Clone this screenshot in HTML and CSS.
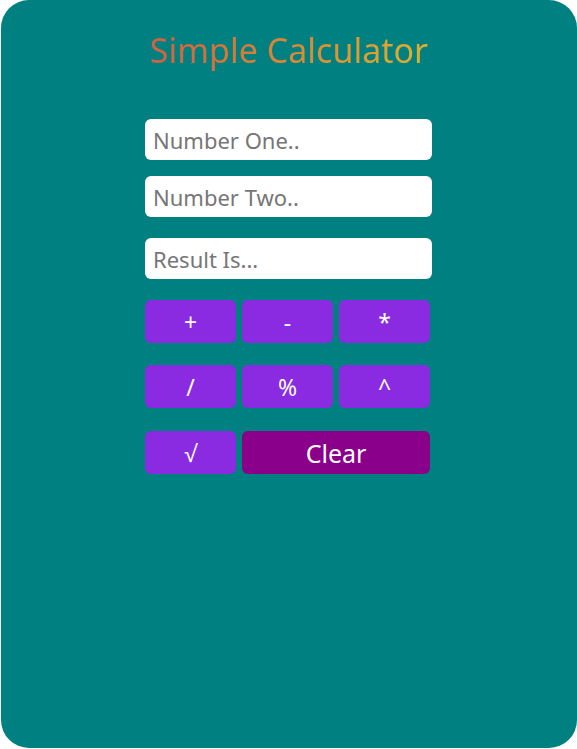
FILE: index.html
```html
<!DOCTYPE html>
<html>
<head>
<meta charset="utf-8">
<link rel="stylesheet" href="styles.css">
</head>
<body>
<div class="calc">
  <h1 class="title">Simple Calculator</h1>
  <div class="panel">
    <input class="field" type="text" placeholder="Number One..">
    <input class="field" type="text" placeholder="Number Two..">
    <input class="field result" type="text" placeholder="Result Is...">
    <div class="keys">
      <button class="key">+</button>
      <button class="key">-</button>
      <button class="key">*</button>
      <button class="key">/</button>
      <button class="key">%</button>
      <button class="key">^</button>
      <button class="key last">√</button>
      <button class="key clear last">Clear</button>
    </div>
  </div>
</div>
</body>
</html>
```

FILE: styles.css
```css
html, body {
  margin: 0;
  padding: 0;
  background: #ffffff;
}
body {
  font-family: "Noto Sans", "Open Sans", sans-serif;
}
.calc {
  margin-left: 1px;
  width: 576px;
  height: 748px;
  background: #008080;
  border-radius: 28px;
  display: flex;
  flex-direction: column;
  align-items: flex-start;
}
.title {
  align-self: center;
  margin: 28px 0 0 0;
  font-size: 34px;
  line-height: 44px;
  font-weight: 400;
  background: linear-gradient(to right, #d2603e, #e0b02c);
  -webkit-background-clip: text;
  background-clip: text;
  color: transparent;
}
.panel {
  margin-top: 47px;
  margin-left: 144px;
  width: 287px;
  display: flex;
  flex-direction: column;
}
.field {
  box-sizing: border-box;
  height: 41px;
  border: none;
  border-radius: 6px;
  padding: 0 8px;
  font-family: inherit;
  font-size: 22px;
  color: #333;
  background: #fff;
  margin: 0 0 16px 0;
  outline: none;
}
.field::placeholder {
  color: #767676;
}
.field.result {
  margin-top: 5px;
  margin-bottom: 21px;
}
.keys {
  display: grid;
  grid-template-columns: 91px 91px 91px;
  column-gap: 6px;
  row-gap: 22px;
}
.key {
  height: 43px;
  border: none;
  border-radius: 6px;
  background: #8a2be2;
  color: #fff;
  font-family: inherit;
  font-size: 23px;
  padding: 0;
}
.key.last {
  margin-top: 1px;
}
.key.clear {
  grid-column: span 2;
  background: #8b008b;
  font-size: 25px;
}
```
